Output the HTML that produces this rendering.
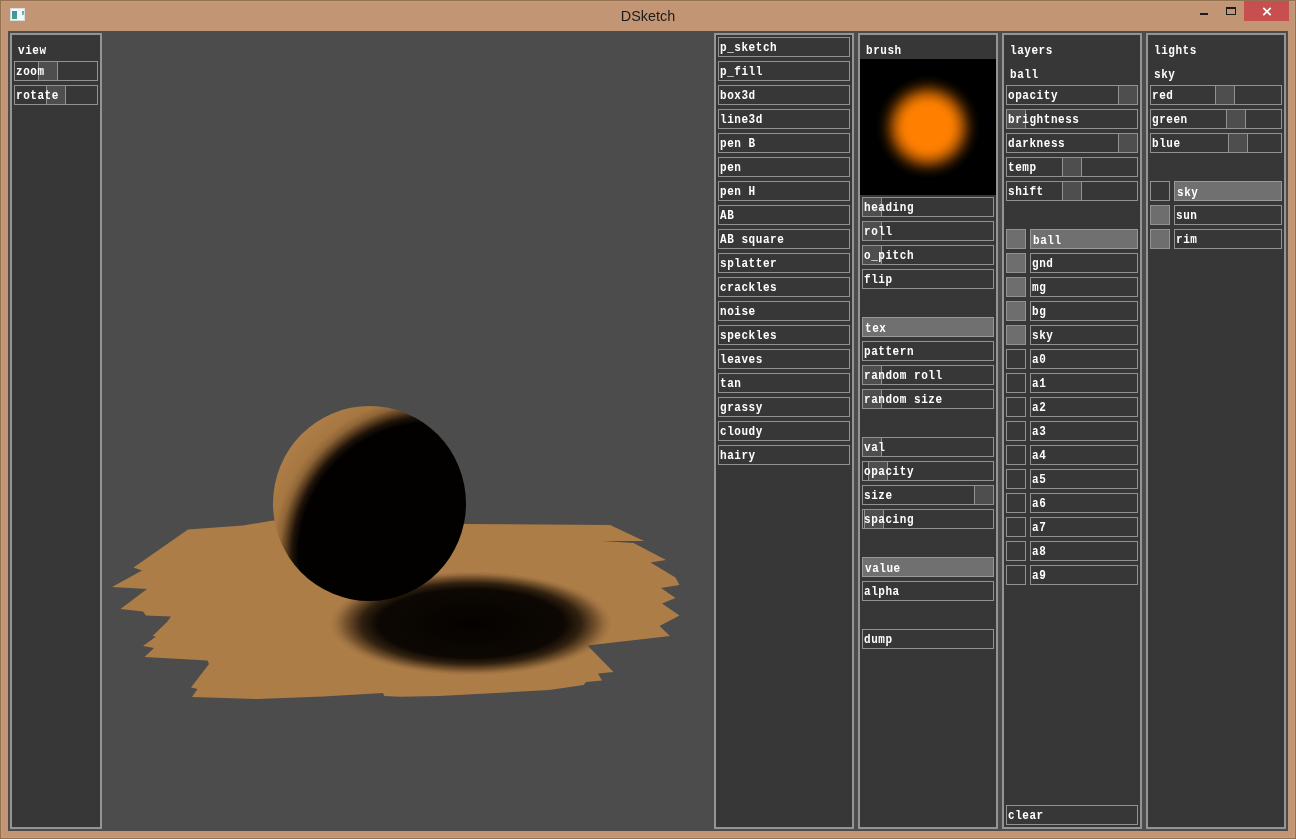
<!DOCTYPE html>
<html><head><meta charset="utf-8"><title>DSketch</title>
<style>
html,body{margin:0;padding:0}
body{width:1296px;height:839px;overflow:hidden;position:relative;background:#c29674;font-family:"Liberation Mono",monospace}
#frame{position:absolute;left:0;top:0;width:1294px;height:837px;border:1px solid #93704f;box-shadow:inset 0 0 0 1px #c69b7b}
#title{position:absolute;left:0;top:6px;width:1296px;text-align:center;font-family:"Liberation Sans",sans-serif;font-size:14.4px;line-height:20px;color:#1b1b1b;will-change:transform}
#icon{position:absolute;left:10px;top:8px;width:13px;height:11px;border:1px solid #d8dde0;background:#f4f6f8}
#icon i{position:absolute;left:1px;top:2px;width:5px;height:8px;background:linear-gradient(#3f8fb5,#3fa67a)}
#icon u{position:absolute;left:11px;top:2px;width:2px;height:4px;background:linear-gradient(#5a9bc9,#7cc79a)}
#close{position:absolute;left:1244px;top:1px;width:45px;height:20px;background:#c84f4f}
#c{position:absolute;left:8px;top:31px;width:1280px;height:800px;background:#4c4c4c;overflow:hidden}
.p{position:absolute;border:2px solid #949494;background:#373737}
.r{position:absolute;height:18px;border:1px solid #929292;background:#373737;overflow:hidden}
.r.s{background:#707070;border-color:#999}
.r b,.l{position:absolute;left:1px;top:2.6px;color:#fff;font-weight:bold;font-size:11px;line-height:15px;letter-spacing:0.55px;white-space:pre;will-change:transform;transform:scaleY(1.2);transform-origin:0 10.4px}
.r.s b{left:2px;top:3.6px}
.l{left:0;top:0}
.k{position:absolute;top:0;width:18px;height:18px;background:#4e4e4e;border-left:1px solid #929292;border-right:1px solid #929292}
.c{position:absolute;width:18px;height:18px;border:1px solid #929292;background:#373737}
.c.on{background:#6e6e6e}
.bi{position:absolute;width:136px;height:136px;background:radial-gradient(circle at 68px 68px,#ff8000 0,#ff8000 19px,#f67b00 24px,#dc6e00 28px,#b55a00 32px,#824100 36px,#4d2600 40px,#241200 44px,#0c0600 48px,#000 52px)}
</style></head><body>
<div id="frame"></div>
<div id="icon"><i></i><u></u></div>
<div id="title">DSketch</div>
<svg style="position:absolute;left:1196px;top:0" width="48" height="24" viewBox="0 0 48 24"><rect x="4" y="13" width="8" height="2" fill="#1b1b1b"/><rect x="30.5" y="8.5" width="9" height="6" fill="none" stroke="#1b1b1b"/><rect x="30" y="7" width="10" height="2" fill="#1b1b1b"/></svg>
<div id="close"><svg width="45" height="20" viewBox="0 0 45 20"><path d="M19.3 6.8l7.4 7.4m0-7.4l-7.4 7.4" stroke="#fff" stroke-width="1.7" fill="none"/></svg></div>
<div id="c">
<svg style="position:absolute;left:92px;top:0" width="614" height="800" viewBox="100 31 614 800">
<defs>
<radialGradient id="bg" gradientUnits="userSpaceOnUse" cx="431" cy="555" r="180">
<stop offset="0" stop-color="#020100"/><stop offset="0.735" stop-color="#020100"/><stop offset="0.772" stop-color="#20140a"/><stop offset="0.803" stop-color="#573b1d"/><stop offset="0.84" stop-color="#8f6638"/><stop offset="0.88" stop-color="#a67741"/><stop offset="1" stop-color="#b07f49"/>
</radialGradient>
<radialGradient id="sh" cx="0.5" cy="0.5" r="0.5">
<stop offset="0" stop-color="#040200" stop-opacity="1"/><stop offset="0.66" stop-color="#080400" stop-opacity="0.97"/><stop offset="0.78" stop-color="#120a02" stop-opacity="0.8"/><stop offset="0.88" stop-color="#1c1003" stop-opacity="0.42"/><stop offset="0.95" stop-color="#241405" stop-opacity="0.12"/><stop offset="1" stop-color="#241405" stop-opacity="0"/>
</radialGradient>
<clipPath id="gc"><path d="M273 520.5L243 525.5L188 529.5L133.500 567.500L142 570.500L112 587L147 589L120.500 609L143 611.500L146 615.500L171 616.500L167 622L152.500 636L156 636.500L143 646L154 648L144.500 657L207.500 660.500L209 664L191 687.500L197.500 689L192 697L257 699L323 696.500L383 693L384.500 696L400 696.700L439 696L549.500 690L583.500 685L586 682L602 680.500L598 673.500L613.500 672L587.500 645.500L670 636L659.500 626L679.500 615.500L662 603.500L675.500 598L661 588L679.500 585L675.500 577.500L650.500 562.500L666 560L633.500 543L602 541L644 541L610 525L464 524Z"/></clipPath>
</defs>
<path d="M273 520.5L243 525.5L188 529.5L133.500 567.500L142 570.500L112 587L147 589L120.500 609L143 611.500L146 615.500L171 616.500L167 622L152.500 636L156 636.500L143 646L154 648L144.500 657L207.500 660.500L209 664L191 687.500L197.500 689L192 697L257 699L323 696.500L383 693L384.500 696L400 696.700L439 696L549.500 690L583.500 685L586 682L602 680.500L598 673.500L613.500 672L587.500 645.500L670 636L659.500 626L679.500 615.500L662 603.500L675.500 598L661 588L679.500 585L675.500 577.500L650.500 562.500L666 560L633.500 543L602 541L644 541L610 525L464 524Z" fill="#ad7d48"/>
<g clip-path="url(#gc)"><ellipse cx="471" cy="623.500" rx="141" ry="52" fill="url(#sh)"/></g>
<ellipse cx="369.500" cy="503.500" rx="96.500" ry="97.500" fill="url(#bg)"/>
</svg>

<div class="p" style="left:2px;top:2px;width:88px;height:792px"></div>
<div class="p" style="left:706px;top:2px;width:136px;height:792px"></div>
<div class="p" style="left:850px;top:2px;width:136px;height:792px"></div>
<div class="p" style="left:994px;top:2px;width:136px;height:792px"></div>
<div class="p" style="left:1138px;top:2px;width:136px;height:792px"></div>
<div class="l" style="left:10px;top:12.600000000000001px">view</div>
<div class="r" style="left:6px;top:30px;width:82px"><i class="k" style="left:23px"></i><b>zoom</b></div>
<div class="r" style="left:6px;top:54px;width:82px"><i class="k" style="left:31px"></i><b>rotate</b></div>
<div class="r" style="left:710px;top:6px;width:130px"><b>p_sketch</b></div>
<div class="r" style="left:710px;top:30px;width:130px"><b>p_fill</b></div>
<div class="r" style="left:710px;top:54px;width:130px"><b>box3d</b></div>
<div class="r" style="left:710px;top:78px;width:130px"><b>line3d</b></div>
<div class="r" style="left:710px;top:102px;width:130px"><b>pen B</b></div>
<div class="r" style="left:710px;top:126px;width:130px"><b>pen</b></div>
<div class="r" style="left:710px;top:150px;width:130px"><b>pen H</b></div>
<div class="r" style="left:710px;top:174px;width:130px"><b>AB</b></div>
<div class="r" style="left:710px;top:198px;width:130px"><b>AB square</b></div>
<div class="r" style="left:710px;top:222px;width:130px"><b>splatter</b></div>
<div class="r" style="left:710px;top:246px;width:130px"><b>crackles</b></div>
<div class="r" style="left:710px;top:270px;width:130px"><b>noise</b></div>
<div class="r" style="left:710px;top:294px;width:130px"><b>speckles</b></div>
<div class="r" style="left:710px;top:318px;width:130px"><b>leaves</b></div>
<div class="r" style="left:710px;top:342px;width:130px"><b>tan</b></div>
<div class="r" style="left:710px;top:366px;width:130px"><b>grassy</b></div>
<div class="r" style="left:710px;top:390px;width:130px"><b>cloudy</b></div>
<div class="r" style="left:710px;top:414px;width:130px"><b>hairy</b></div>
<div class="l" style="left:858px;top:12.600000000000001px">brush</div>
<div class="bi" style="left:852px;top:28px"></div>
<div class="r" style="left:854px;top:166px;width:130px"><i class="k" style="left:-1px"></i><b>heading</b></div>
<div class="r" style="left:854px;top:190px;width:130px"><i class="k" style="left:-1px"></i><b>roll</b></div>
<div class="r" style="left:854px;top:214px;width:130px"><i class="k" style="left:-1px"></i><b>o_pitch</b></div>
<div class="r" style="left:854px;top:238px;width:130px"><b>flip</b></div>
<div class="r s" style="left:854px;top:286px;width:130px"><b>tex</b></div>
<div class="r" style="left:854px;top:310px;width:130px"><b>pattern</b></div>
<div class="r" style="left:854px;top:334px;width:130px"><i class="k" style="left:-1px"></i><b>random roll</b></div>
<div class="r" style="left:854px;top:358px;width:130px"><i class="k" style="left:-1px"></i><b>random size</b></div>
<div class="r" style="left:854px;top:406px;width:130px"><i class="k" style="left:-1px"></i><b>val</b></div>
<div class="r" style="left:854px;top:430px;width:130px"><i class="k" style="left:5px"></i><b>opacity</b></div>
<div class="r" style="left:854px;top:454px;width:130px"><i class="k" style="left:111px"></i><b>size</b></div>
<div class="r" style="left:854px;top:478px;width:130px"><i class="k" style="left:1px"></i><b>spacing</b></div>
<div class="r s" style="left:854px;top:526px;width:130px"><b>value</b></div>
<div class="r" style="left:854px;top:550px;width:130px"><b>alpha</b></div>
<div class="r" style="left:854px;top:598px;width:130px"><b>dump</b></div>
<div class="l" style="left:1002px;top:12.600000000000001px">layers</div>
<div class="l" style="left:1002px;top:36.599999999999994px">ball</div>
<div class="r" style="left:998px;top:54px;width:130px"><i class="k" style="left:111px"></i><b>opacity</b></div>
<div class="r" style="left:998px;top:78px;width:130px"><i class="k" style="left:-1px"></i><b>brightness</b></div>
<div class="r" style="left:998px;top:102px;width:130px"><i class="k" style="left:111px"></i><b>darkness</b></div>
<div class="r" style="left:998px;top:126px;width:130px"><i class="k" style="left:55px"></i><b>temp</b></div>
<div class="r" style="left:998px;top:150px;width:130px"><i class="k" style="left:55px"></i><b>shift</b></div>
<div class="c on" style="left:998px;top:198px"></div>
<div class="r s" style="left:1022px;top:198px;width:106px"><b>ball</b></div>
<div class="c on" style="left:998px;top:222px"></div>
<div class="r" style="left:1022px;top:222px;width:106px"><b>gnd</b></div>
<div class="c on" style="left:998px;top:246px"></div>
<div class="r" style="left:1022px;top:246px;width:106px"><b>mg</b></div>
<div class="c on" style="left:998px;top:270px"></div>
<div class="r" style="left:1022px;top:270px;width:106px"><b>bg</b></div>
<div class="c on" style="left:998px;top:294px"></div>
<div class="r" style="left:1022px;top:294px;width:106px"><b>sky</b></div>
<div class="c" style="left:998px;top:318px"></div>
<div class="r" style="left:1022px;top:318px;width:106px"><b>a0</b></div>
<div class="c" style="left:998px;top:342px"></div>
<div class="r" style="left:1022px;top:342px;width:106px"><b>a1</b></div>
<div class="c" style="left:998px;top:366px"></div>
<div class="r" style="left:1022px;top:366px;width:106px"><b>a2</b></div>
<div class="c" style="left:998px;top:390px"></div>
<div class="r" style="left:1022px;top:390px;width:106px"><b>a3</b></div>
<div class="c" style="left:998px;top:414px"></div>
<div class="r" style="left:1022px;top:414px;width:106px"><b>a4</b></div>
<div class="c" style="left:998px;top:438px"></div>
<div class="r" style="left:1022px;top:438px;width:106px"><b>a5</b></div>
<div class="c" style="left:998px;top:462px"></div>
<div class="r" style="left:1022px;top:462px;width:106px"><b>a6</b></div>
<div class="c" style="left:998px;top:486px"></div>
<div class="r" style="left:1022px;top:486px;width:106px"><b>a7</b></div>
<div class="c" style="left:998px;top:510px"></div>
<div class="r" style="left:1022px;top:510px;width:106px"><b>a8</b></div>
<div class="c" style="left:998px;top:534px"></div>
<div class="r" style="left:1022px;top:534px;width:106px"><b>a9</b></div>
<div class="r" style="left:998px;top:774px;width:130px"><b>clear</b></div>
<div class="l" style="left:1146px;top:12.600000000000001px">lights</div>
<div class="l" style="left:1146px;top:36.599999999999994px">sky</div>
<div class="r" style="left:1142px;top:54px;width:130px"><i class="k" style="left:64px"></i><b>red</b></div>
<div class="r" style="left:1142px;top:78px;width:130px"><i class="k" style="left:75px"></i><b>green</b></div>
<div class="r" style="left:1142px;top:102px;width:130px"><i class="k" style="left:77px"></i><b>blue</b></div>
<div class="c" style="left:1142px;top:150px"></div>
<div class="r s" style="left:1166px;top:150px;width:106px"><b>sky</b></div>
<div class="c on" style="left:1142px;top:174px"></div>
<div class="r" style="left:1166px;top:174px;width:106px"><b>sun</b></div>
<div class="c on" style="left:1142px;top:198px"></div>
<div class="r" style="left:1166px;top:198px;width:106px"><b>rim</b></div>
</div>
</body></html>
